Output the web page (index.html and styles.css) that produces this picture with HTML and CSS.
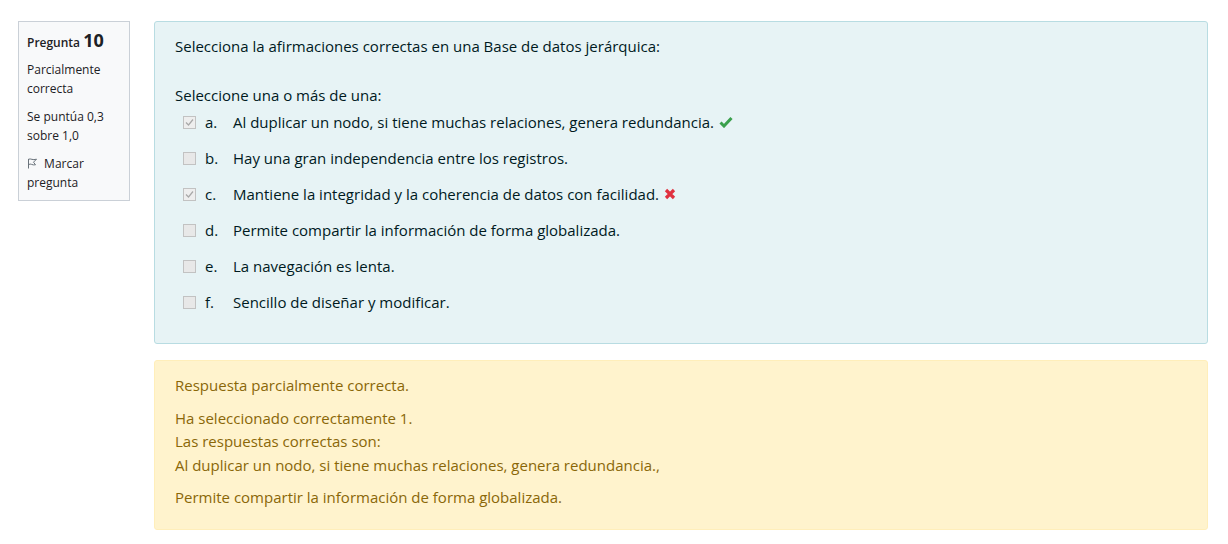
FILE: index.html
```html
<!DOCTYPE html>
<html lang="es">
<head>
<meta charset="utf-8">
<title>Pregunta 10</title>
<link rel="stylesheet" href="styles.css">
</head>
<body>
<div class="que">
  <div class="info">
    <h3 class="qno">Pregunta <span class="num">10</span></h3>
    <div class="state">Parcialmente correcta</div>
    <div class="grade">Se puntúa 0,3 sobre 1,0</div>
    <div class="flag">
      <svg class="flag-icon" width="11" height="11" viewBox="0 0 11 11"><path d="M1.5 10.5 V1 M1.5 1.2 C4 0.2 5.5 2.6 9.5 1.2 L6.5 4.2 L8.5 6.8 C5 7.6 4 5 1.5 6.6" fill="none" stroke="#6a737b" stroke-width="1"/></svg>
      Marcar pregunta
    </div>
  </div>
  <div class="content">
    <div class="formulation">
      <p class="qtext">Selecciona la afirmaciones correctas en una Base de datos jerárquica:</p>
      <div class="prompt">Seleccione una o más de una:</div>
      <div class="answer">
        <div class="opt">
          <span class="cb checked"><svg width="11" height="11" viewBox="0 0 11 11"><path d="M2 5.5 L4.5 8 L9 2.5" fill="none" stroke="#a8a8a8" stroke-width="1.2"/></svg></span>
          <span class="letter">a.</span>
          <span class="txt">Al duplicar un nodo, si tiene muchas relaciones, genera redundancia.</span>
          <svg class="mark" width="14" height="12" viewBox="0 0 14 12"><path d="M1.5 6.5 L5 10 L12.5 2" fill="none" stroke="#3aa04c" stroke-width="3" stroke-linejoin="miter"/></svg>
        </div>
        <div class="opt">
          <span class="cb"></span>
          <span class="letter">b.</span>
          <span class="txt">Hay una gran independencia entre los registros.</span>
        </div>
        <div class="opt">
          <span class="cb checked"><svg width="11" height="11" viewBox="0 0 11 11"><path d="M2 5.5 L4.5 8 L9 2.5" fill="none" stroke="#a8a8a8" stroke-width="1.2"/></svg></span>
          <span class="letter">c.</span>
          <span class="txt">Mantiene la integridad y la coherencia de datos con facilidad.</span>
          <svg class="mark" width="12" height="12" viewBox="0 0 12 12"><path d="M2 2 L10 10 M10 2 L2 10" fill="none" stroke="#e0313f" stroke-width="3.2"/></svg>
        </div>
        <div class="opt">
          <span class="cb"></span>
          <span class="letter">d.</span>
          <span class="txt">Permite compartir la información de forma globalizada.</span>
        </div>
        <div class="opt">
          <span class="cb"></span>
          <span class="letter">e.</span>
          <span class="txt">La navegación es lenta.</span>
        </div>
        <div class="opt">
          <span class="cb"></span>
          <span class="letter">f.</span>
          <span class="txt">Sencillo de diseñar y modificar.</span>
        </div>
      </div>
    </div>
    <div class="outcome">
      <p class="feedback">Respuesta parcialmente correcta.</p>
      <p class="numpartscorrect">Ha seleccionado correctamente 1.<br>Las respuestas correctas son:<br>Al duplicar un nodo, si tiene muchas relaciones, genera redundancia.,</p>
      <p class="right">Permite compartir la información de forma globalizada.</p>
    </div>
  </div>
</div>
</body>
</html>
```

FILE: styles.css
```css
html, body {
  margin: 0;
  padding: 0;
  background: #ffffff;
}
body {
  font-family: "Open Sans", "Noto Sans", sans-serif;
  color: #001a1e;
}
.que {
  display: flex;
  align-items: flex-start;
  gap: 24px;
  padding: 21px 20px 0 18px;
}
.info {
  box-sizing: border-box;
  width: 112px;
  flex: 0 0 112px;
  background: #f8f9fa;
  border: 1px solid #cad0d7;
  padding: 7px 8px 8px 8px;
  font-size: 12px;
  line-height: 19px;
  color: #1d2125;
}
.qno {
  margin: 0 0 6px 0;
  font-size: 12px;
  font-weight: 600;
  line-height: 22px;
}
.qno .num {
  font-size: 18px;
  font-weight: 700;
}
.state, .grade {
  margin-bottom: 9px;
}
.flag-icon {
  vertical-align: -1px;
  margin-right: 3px;
}
.content {
  flex: 1;
  min-width: 0;
}
.formulation {
  background: #e7f3f5;
  border: 1px solid #b8dce2;
  border-radius: 3px;
  padding: 13px 20px 30px 20px;
  font-size: 15px;
  line-height: 22px;
  color: #001a1e;
}
.qtext {
  margin: 0 0 27px 0;
}
.prompt {
  margin-bottom: 5px;
}
.answer {
  display: flex;
  flex-direction: column;
  gap: 14px;
}
.opt {
  display: flex;
  align-items: center;
  height: 22px;
}
.cb {
  box-sizing: border-box;
  width: 13px;
  height: 13px;
  margin-left: 8px;
  margin-right: 9px;
  background: #e8e8e8;
  border: 1px solid #c2c2c2;
  display: flex;
  align-items: center;
  justify-content: center;
}
.cb.checked {
  background: #eeeeee;
}
.letter {
  width: 28px;
}
.mark {
  margin-left: 5px;
}
.outcome {
  margin-top: 16px;
  background: #fff3cd;
  border: 1px solid #ffeeba;
  border-radius: 3px;
  padding: 13px 20px 19px 20px;
  font-size: 15px;
  line-height: 23.5px;
  color: #8a6708;
}
.outcome p {
  margin: 0;
}
.outcome .numpartscorrect {
  margin-top: 9px;
}
.outcome .right {
  margin-top: 9px;
}
```
